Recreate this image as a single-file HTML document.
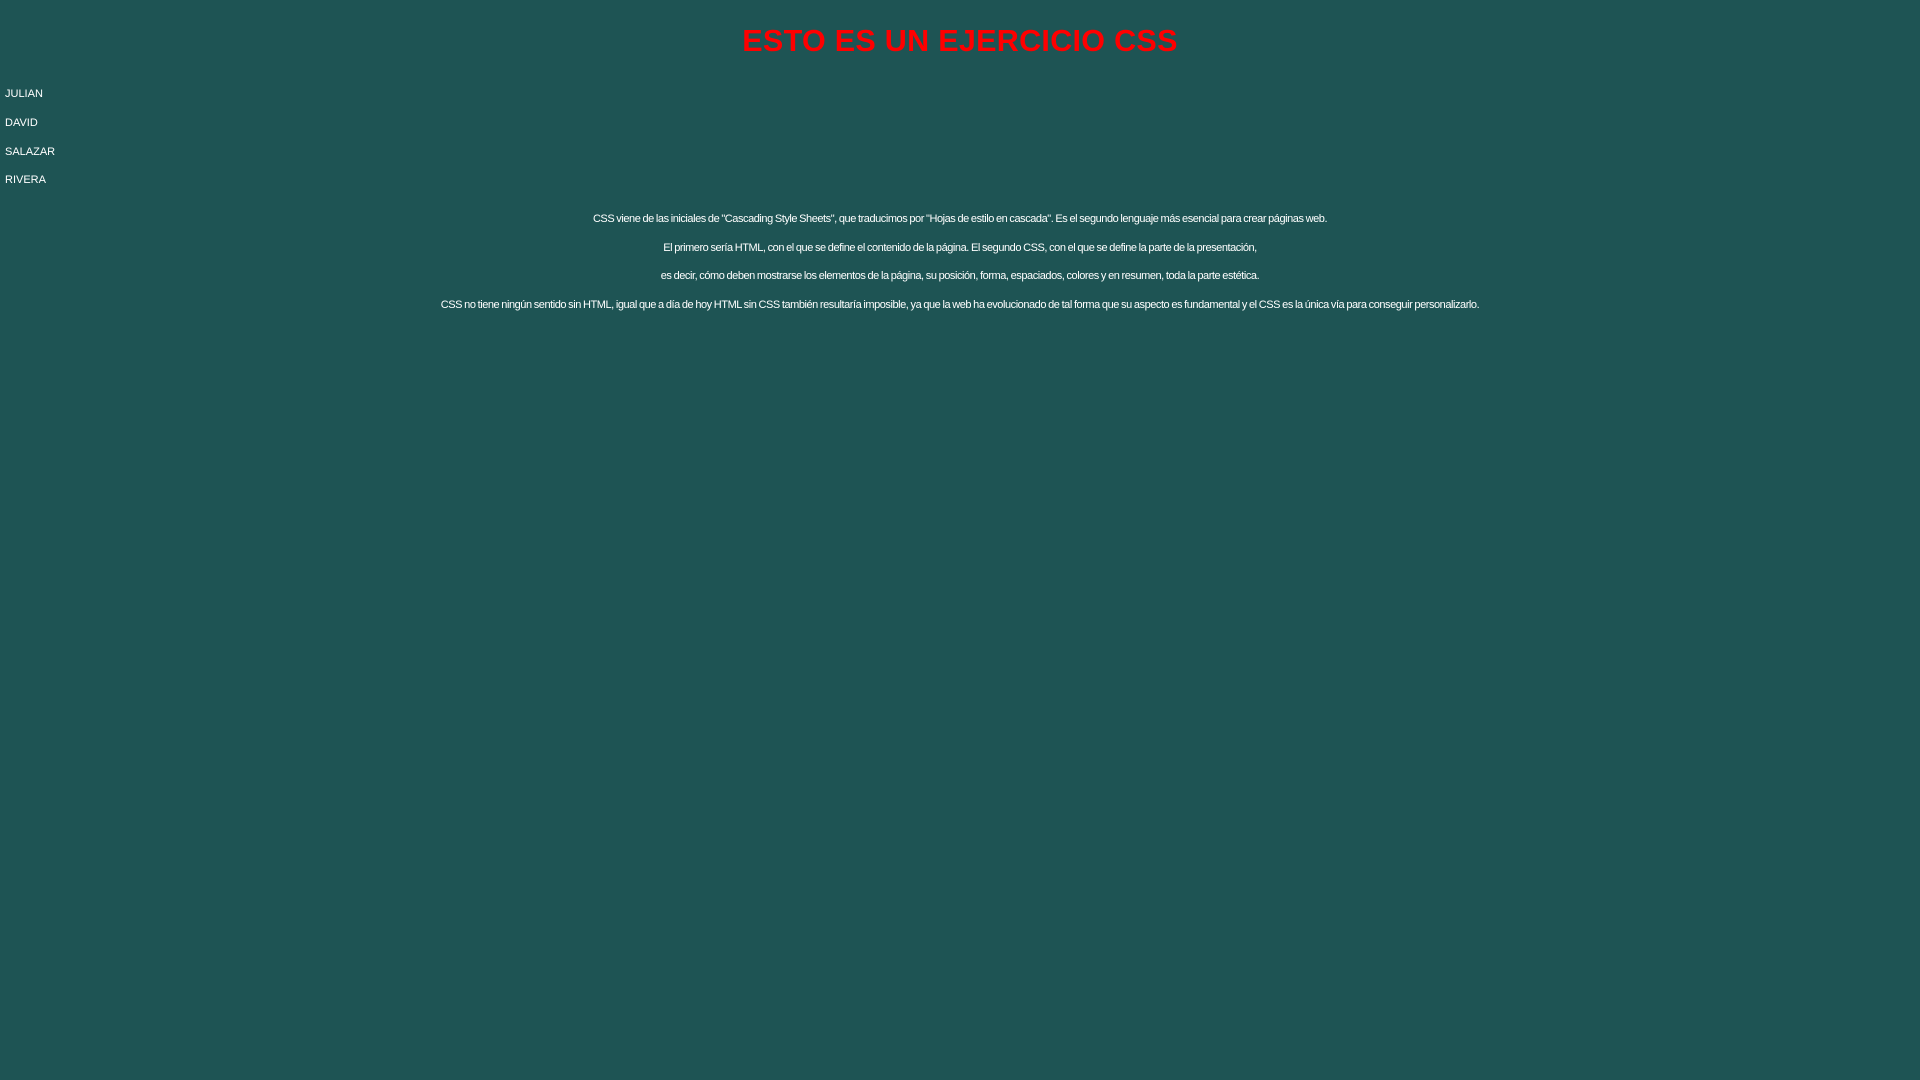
<!DOCTYPE html>
<html><head><meta charset="utf-8"><style>
html,body{margin:0;padding:0;background:#1e5454;width:1920px;height:1080px;overflow:hidden;font-family:"Liberation Sans",sans-serif;color:#fff}
h1{position:absolute;top:19px;left:0;width:1920px;text-align:center;margin:0;font-size:30.5px;font-weight:bold;color:#f00;line-height:44px;letter-spacing:0.3px}
.n{position:absolute;left:5px;font-size:11px;line-height:14px;top:0}
.p{position:absolute;left:0;width:1920px;text-align:center;font-size:11px;line-height:14px;letter-spacing:-0.45px;word-spacing:-0.5px}
</style></head><body>
<h1>ESTO ES UN EJERCICIO CSS</h1>
<div class="n" style="top:87px">JULIAN</div>
<div class="n" style="top:116px">DAVID</div>
<div class="n" style="top:145px">SALAZAR</div>
<div class="n" style="top:173px">RIVERA</div>
<div class="p" style="top:212px">CSS viene de las iniciales de "Cascading Style Sheets", que traducimos por "Hojas de estilo en cascada". Es el segundo lenguaje más esencial para crear páginas web.</div>
<div class="p" style="top:241px">El primero sería HTML, con el que se define el contenido de la página. El segundo CSS, con el que se define la parte de la presentación,</div>
<div class="p" style="top:269px">es decir, cómo deben mostrarse los elementos de la página, su posición, forma, espaciados, colores y en resumen, toda la parte estética.</div>
<div class="p" style="top:298px">CSS no tiene ningún sentido sin HTML, igual que a día de hoy HTML sin CSS también resultaría imposible, ya que la web ha evolucionado de tal forma que su aspecto es fundamental y el CSS es la única vía para conseguir personalizarlo.</div>
</body></html>
